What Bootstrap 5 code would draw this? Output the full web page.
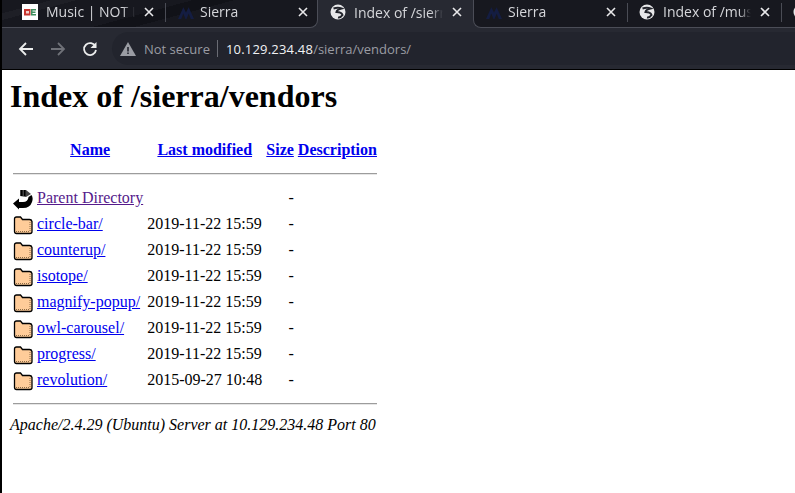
<!DOCTYPE html>
<html lang="en">
<head>
<meta charset="utf-8">
<title>Index of /sierra/vendors</title>
<link href="https://cdn.jsdelivr.net/npm/bootstrap@5.3.0/dist/css/bootstrap.min.css" rel="stylesheet">
<style>
html,body{height:100%;}
body{margin:0;padding-left:2px;background:#000;overflow:hidden;font-family:"Liberation Serif",serif;font-size:16px;line-height:normal;color:#000;}
.chrome-top{height:70px;background:#000;font-family:"Open Sans","Noto Sans",sans-serif;}
.tabstrip{height:28px;background:#272932;overflow:hidden;}
.tabgroup{background:#17181f;border-bottom:1px solid #4b4d57;height:28px;}
.tabgroup-l{border-right:1px solid #4b4d57;border-bottom-right-radius:8px;width:316px;flex:none;background:linear-gradient(165deg,#17181f 0 12%,#1e1f26 12% 18%,#17181f 18% 46%,#111218 46% 56%,#17181f 56%);}
.tabgroup-r{border-left:1px solid #4b4d57;border-bottom-left-radius:8px;flex:1 1 auto;min-width:0;}
.tabx{height:27px;padding-bottom:4px;color:#d5d6da;font-size:14px;white-space:nowrap;column-gap:8px;flex:none;}
.tabx-active{height:28px;width:155px;flex:none;padding-left:12px;padding-right:10px;}
.t1{width:163px;padding-left:20px;padding-right:10px;}
.t2{width:152px;padding-left:12px;padding-right:9px;column-gap:6px;}
.t3{width:153px;padding-left:12px;padding-right:10px;column-gap:6px;}
.t4{width:153px;padding-left:11px;padding-right:10px;}
.t5{width:30px;padding-left:11px;}
.tabx-sep{width:1px;height:19px;margin-top:3px;background:#4a4c55;flex:none;}
.tabtitle{overflow:hidden;flex:1 1 auto;min-width:0;-webkit-mask-image:linear-gradient(to right,#000 86%,transparent 100%);mask-image:linear-gradient(to right,#000 86%,transparent 100%);}
.tabclose{flex:none;width:12px;height:12px;}
.favi{flex:none;width:16px;height:16px;}
.toolbar{height:41px;background:#272932;}
.urlpill{height:33px;background:#22242d;border-radius:17px 0 0 17px;margin-left:14px;padding-left:8px;flex:1 1 auto;font-size:13px;color:#9a9ca3;}
.urlhost{color:#f1f2f4;letter-spacing:.2px;}
.urlsep{width:1px;height:17px;background:#6a6c74;margin:0 8px 0 7px;}
.navnext{margin-left:16px;}
.pagebody{background:#fff;height:423px;padding:8px;}
.pagetitle{font-size:32px;font-weight:700;line-height:37px;margin:0 0 15px;}
.apache{border-collapse:separate;border-spacing:2px;margin:0;}
.apache th,.apache td{padding:1px;vertical-align:top;}
.apache th{text-align:center;font-weight:700;padding-top:9px;padding-bottom:12px;}
.apache td{height:24px;padding:0 1px;}
.apache .rulecell{padding:0 0 12px;}
.apache .rulecell-end{padding:6px 0 0;}
.apache a{color:#00e;text-decoration:underline;}
.apache a.seen{color:#551a8b;}
.rule{border:0;border-top:1px solid #9c9c9c;border-bottom:1px solid #e6e6e6;margin:0 1px;opacity:1;height:2px;}
.dashcell{text-align:right;}
.foot{font-style:italic;margin-top:9px;}
.rowicon{display:block;}
</style>
</head>
<body>
<svg width="0" height="0" class="d-block">
  <defs>
    <symbol id="folder" viewBox="0 0 20 22"><path d="M1.500 4q0-2 2-2h4l2 2.500h7q2 0 2.500 2v10q0 2-2 2H3.500q-2 0-2-2z" fill="#fc9" stroke="#000" stroke-width="1.300"/><path d="M3 16.500h14M17 7v9" stroke="#8a6a45" stroke-dasharray="1 1" fill="none"/></symbol>
    <symbol id="closex" viewBox="0 0 12 12"><path d="M2 2l8 8M10 2l-8 8" stroke="#e8e8ea" stroke-width="1.600"/></symbol>
    <symbol id="mtn" viewBox="0 0 15 15"><path d="M0 14L5 3l2.500 5L10 3l5 11h-3L10 9l-2 5H7L5 9l-2 5z" fill="#141d42"/></symbol>
    <symbol id="globe" viewBox="0 0 16 16"><circle cx="8" cy="8" r="7.500" fill="#e8e8ea"/><path d="M3.500 4.500Q8 3 11.500 4.500 7 5.500 6.500 8q5 0 6 3-2 3-4.500 2.500" fill="none" stroke="#22242c" stroke-width="2"/></symbol>
  </defs>
</svg>
<header class="chrome-top">
  <div class="tabstrip d-flex">
    <div class="tabgroup tabgroup-l d-flex">
      <div class="tabx t1 d-flex align-items-center">
        <svg class="favi" viewBox="0 0 16 16"><rect width="16" height="16" fill="#fff"/><rect x="2" y="5" width="6.500" height="6.500" fill="#c8352f"/><rect x="4" y="7" width="3" height="2.500" fill="#f3d0cc"/><path d="M9 5h5v1.500h-3.500v1H13.500V9h-3v1h3.500v1.500H9z" fill="#3f8f5f"/></svg>
        <span class="tabtitle">Music | NOT L</span>
        <svg class="tabclose"><use href="#closex"/></svg>
      </div>
      <div class="tabx-sep"></div>
      <div class="tabx t2 d-flex align-items-center">
        <svg class="favi"><use href="#mtn"/></svg>
        <span class="tabtitle">Sierra</span>
        <svg class="tabclose"><use href="#closex"/></svg>
      </div>
    </div>
    <div class="tabx tabx-active d-flex align-items-center">
      <svg class="favi"><use href="#globe"/></svg>
      <span class="tabtitle">Index of /sierr</span>
      <svg class="tabclose"><use href="#closex"/></svg>
    </div>
    <div class="tabgroup tabgroup-r d-flex">
      <div class="tabx t3 d-flex align-items-center">
        <svg class="favi"><use href="#mtn"/></svg>
        <span class="tabtitle">Sierra</span>
        <svg class="tabclose"><use href="#closex"/></svg>
      </div>
      <div class="tabx-sep"></div>
      <div class="tabx t4 d-flex align-items-center">
        <svg class="favi"><use href="#globe"/></svg>
        <span class="tabtitle">Index of /mus</span>
        <svg class="tabclose"><use href="#closex"/></svg>
      </div>
      <div class="tabx-sep"></div>
      <div class="tabx t5 d-flex align-items-center">
        <svg class="favi"><use href="#globe"/></svg>
      </div>
    </div>
  </div>
  <div class="toolbar d-flex align-items-center">
    <svg width="16" height="16" viewBox="0 0 16 16" class="ms-3"><path d="M15 8H2M8 2L2 8l6 6" fill="none" stroke="#eceded" stroke-width="1.800"/></svg>
    <svg width="16" height="16" viewBox="0 0 16 16" class="navnext"><path d="M1 8h13M8 2l6 6-6 6" fill="none" stroke="#6f7178" stroke-width="1.800"/></svg>
    <svg width="16" height="16" viewBox="0 0 16 16" class="navnext"><path d="M13.500 5.500A6 6 0 1 0 14 9" fill="none" stroke="#eceded" stroke-width="1.800"/><path d="M14.500 1v6h-6z" fill="#eceded"/></svg>
    <div class="urlpill d-flex align-items-center">
      <svg width="16" height="14" viewBox="0 0 16 14"><path d="M8 0l8 14H0z" fill="#9a9ca3"/><path d="M7.200 5h1.600v4.500H7.200zM7.200 10.500h1.600V12H7.200z" fill="#22242d"/></svg>
      <span class="ms-2">Not secure</span>
      <span class="urlsep"></span>
      <span><span class="urlhost">10.129.234.48</span>/sierra/vendors/</span>
    </div>
  </div>
</header>
<main class="pagebody">
  <h1 class="pagetitle">Index of /sierra/vendors</h1>
  <table class="apache">
    <thead>
      <tr><th></th><th><a href="#">Name</a></th><th><a href="#">Last modified</a></th><th><a href="#">Size</a></th><th><a href="#">Description</a></th></tr>
      <tr><th colspan="5" class="rulecell"><hr class="rule"></th></tr>
    </thead>
    <tbody>
      <tr><td><svg class="rowicon" width="20" height="22" viewBox="0 0 20 22"><path d="M7 1h6l5 4-5 3-6-1z" fill="#444"/><path d="M8 1h1.500v6H8zM11 1h1.500v6H11z" fill="#000"/><path d="M0 14.500L6 9.500v3.500h4q5 0 5.500-5L18.500 6q2 3 .5 7-2 6-9 6H6v1.500z" fill="#000"/></svg></td><td><a class="seen" href="#">Parent Directory</a></td><td></td><td class="dashcell">-</td><td></td></tr>
      <tr><td><svg class="rowicon" width="20" height="22"><use href="#folder"/></svg></td><td><a href="#">circle-bar/</a></td><td>2019-11-22 15:59</td><td class="dashcell">-</td><td></td></tr>
      <tr><td><svg class="rowicon" width="20" height="22"><use href="#folder"/></svg></td><td><a href="#">counterup/</a></td><td>2019-11-22 15:59</td><td class="dashcell">-</td><td></td></tr>
      <tr><td><svg class="rowicon" width="20" height="22"><use href="#folder"/></svg></td><td><a href="#">isotope/</a></td><td>2019-11-22 15:59</td><td class="dashcell">-</td><td></td></tr>
      <tr><td><svg class="rowicon" width="20" height="22"><use href="#folder"/></svg></td><td><a href="#">magnify-popup/</a></td><td>2019-11-22 15:59</td><td class="dashcell">-</td><td></td></tr>
      <tr><td><svg class="rowicon" width="20" height="22"><use href="#folder"/></svg></td><td><a href="#">owl-carousel/</a></td><td>2019-11-22 15:59</td><td class="dashcell">-</td><td></td></tr>
      <tr><td><svg class="rowicon" width="20" height="22"><use href="#folder"/></svg></td><td><a href="#">progress/</a></td><td>2019-11-22 15:59</td><td class="dashcell">-</td><td></td></tr>
      <tr><td><svg class="rowicon" width="20" height="22"><use href="#folder"/></svg></td><td><a href="#">revolution/</a></td><td>2015-09-27 10:48</td><td class="dashcell">-</td><td></td></tr>
      <tr><th colspan="5" class="rulecell-end"><hr class="rule"></th></tr>
    </tbody>
  </table>
  <address class="foot mb-0">Apache/2.4.29 (Ubuntu) Server at 10.129.234.48 Port 80</address>
</main>
</body>
</html>
